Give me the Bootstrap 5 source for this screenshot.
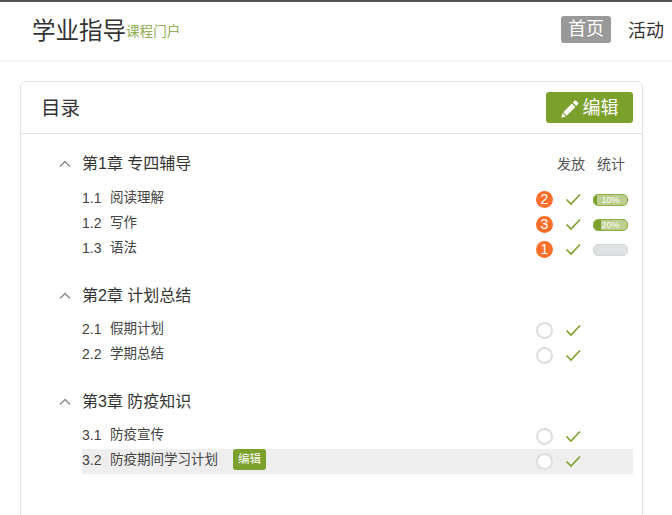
<!DOCTYPE html>
<html lang="zh-CN">
  <head>
    <meta charset="UTF-8" />
    <title>学业指导</title>
    <link rel="stylesheet" href="https://cdn.jsdelivr.net/npm/bootstrap@5.3.0/dist/css/bootstrap.min.css" />
    <style>
      html, body { height: 515px; overflow: hidden; }
      body { font-family: "Liberation Sans", "Noto Sans CJK SC", sans-serif; color: #333; background: #fff; }
      #site-header { height: 62px; border-top: 2px solid #555; border-bottom: 2px solid #f3f3f3; padding: 0 1px 0 32px; }
      .brand-name { font-size: 23.5px; line-height: 30px; color: #333; }
      .brand-sub { font-size: 13.6px; color: #8fae50; margin-top: 2px; }
      .top-nav { gap: 10px; }
      .top-link { font-size: 18px; line-height: 27px; padding: 0 7px; border-radius: 3px; color: #333; text-decoration: none; }
      .top-link.on { background: #999; color: #fff; margin-bottom: 3px; }
      #catalog { margin: 19px 29px 0 20px; height: 520px; border-color: #e2e2e2; border-radius: 6px; }
      #catalog .card-header { height: 52px; padding: 3px 9px 0 20px; background: #fff; border-color: #e2e2e2; }
      .catalog-title { font-size: 19.5px; color: #333; }
      .edit-main { background: #7ca02c; color: #fff; font-size: 18px; height: 31px; width: 87px; padding: 2px 0 0; border: 0; border-radius: 3px; margin-top: -3px; }
      #catalog .card-body { padding: 14px 9px 0 34px; }
      .chapter { margin-bottom: 18px; }
      .chapter-head { height: 32px; }
      .chapter-name { font-size: 16px; color: #333; }
      .fold-icon { width: 12px; height: 8px; margin: 0 11px 0 4px; }
      .col-labels { font-size: 14px; color: #555; gap: 12px; margin-right: 8px; }
      .lesson-list { padding-top: 6px; }
      .chapter:first-child .lesson-list { padding-top: 7px; }
      .lesson { height: 25px; margin-left: 27px; font-size: 13.5px; color: #444; }
      .lesson.active-row { background: #eee; }
      .lesson-text { margin-bottom: 2px; }
      .lesson-no { width: 28px; font-size: 14px; }
      .edit-tag { background: #7ca02c; color: #fff; font-size: 11.5px; line-height: 21px; padding: 0 5px; border-radius: 3px; margin: 0 0 4px 15px; }
      .status-cell { width: 98px; }
      .dot { width: 17px; height: 17px; border-radius: 50%; font-size: 14px; line-height: 17px; text-align: center; color: #fff; background: #ff6f2c; margin: 0 12px 0 1px; }
      .dot.empty { background: #fff; border: 2px solid #ddd; }
      .check-icon { width: 16px; height: 14px; margin: 0 12px 2px 0; }
      .mini-bar { width: 35px; height: 12px; background: #dfe2e2; border: 1px solid #d3d6d6; border-radius: 5px; }
      .mini-bar.filled { background: #bccf8e; border-color: #8fac44; position: relative; }
      .mini-fill { background: #7ca02c; }
      .mini-bar span { position: absolute; inset: 0; font-size: 9px; line-height: 10px; text-align: center; color: #fff; }
    </style>
  </head>
  <body>
    <header id="site-header" class="d-flex align-items-center justify-content-between">
      <div class="d-flex align-items-center">
        <span class="brand-name">学业指导</span><span class="brand-sub">课程门户</span>
      </div>
      <nav class="top-nav d-flex align-items-center">
        <a class="top-link on" href="#">首页</a>
        <a class="top-link" href="#">活动</a>
      </nav>
    </header>

    <main id="catalog" class="card">
      <div class="card-header d-flex align-items-center justify-content-between">
        <span class="catalog-title">目录</span>
        <button type="button" class="btn edit-main d-flex align-items-center justify-content-center gap-1">
          <svg width="18" height="18" viewBox="0 0 18 18"><path fill="#fff" d="M13.6.8c.5-.5 1-.5 1.5 0l2 2c.5.5.5 1 0 1.500L15.300 6.100 11.800 2.600zM10.900 3.500l3.500 3.500-8.700 8.700-3.500-3.500zM1.500 13l3.400 3.500-4.600 1.200z"/></svg>
          编辑
        </button>
      </div>
      <div class="card-body" id="chapters"></div>
    </main>

    <script>
      const chapters = [
        { name: "第1章 专四辅导", labels: true, lessons: [
          { no: "1.1", title: "阅读理解", dot: "2", bar: 10 },
          { no: "1.2", title: "写作", dot: "3", bar: 20 },
          { no: "1.3", title: "语法", dot: "1", bar: 0 }
        ] },
        { name: "第2章 计划总结", lessons: [
          { no: "2.1", title: "假期计划" },
          { no: "2.2", title: "学期总结" }
        ] },
        { name: "第3章 防疫知识", lessons: [
          { no: "3.1", title: "防疫宣传" },
          { no: "3.2", title: "防疫期间学习计划", active: true }
        ] }
      ];

      const checkSvg = '<svg class="check-icon flex-shrink-0" viewBox="0 0 16 14"><path fill="none" stroke="#7ca02c" stroke-width="1.6" d="M1.500 7.500l4.500 4.500L15 2.500"/></svg>';

      function barHtml(lesson) {
        if (lesson.bar === undefined) return "";
        if (!lesson.bar) return '<div class="mini-bar"></div>';
        return `<div class="mini-bar filled d-flex overflow-hidden"><div class="mini-fill" style="width:${lesson.bar}%"></div><span>${lesson.bar}%</span></div>`;
      }

      document.getElementById("chapters").innerHTML = chapters.map((ch) => `
        <section class="chapter">
          <div class="chapter-head d-flex align-items-center">
            <svg class="fold-icon" viewBox="0 0 12 8"><path fill="none" stroke="#888" stroke-width="1.3" d="M1 6.500l5-5 5 5"/></svg>
            <span class="chapter-name flex-grow-1">${ch.name}</span>
            ${ch.labels ? '<div class="col-labels d-flex"><span>发放</span><span>统计</span></div>' : ""}
          </div>
          <div class="lesson-list">
          ${ch.lessons.map((l) => `
            <div class="lesson d-flex align-items-center ${l.active ? "active-row" : ""}">
              <span class="lesson-no lesson-text">${l.no}</span>
              <span class="lesson-text">${l.title}</span>
              ${l.active ? '<span class="edit-tag">编辑</span>' : ""}
              <div class="status-cell d-flex align-items-center ms-auto">
                <div class="dot flex-shrink-0 ${l.dot ? "" : "empty"}">${l.dot || ""}</div>
                ${checkSvg}
                ${barHtml(l)}
              </div>
            </div>`).join("")}
          </div>
        </section>`).join("");
    </script>
    <script src="https://cdn.jsdelivr.net/npm/bootstrap@5.3.0/dist/js/bootstrap.bundle.min.js"></script>
  </body>
</html>
